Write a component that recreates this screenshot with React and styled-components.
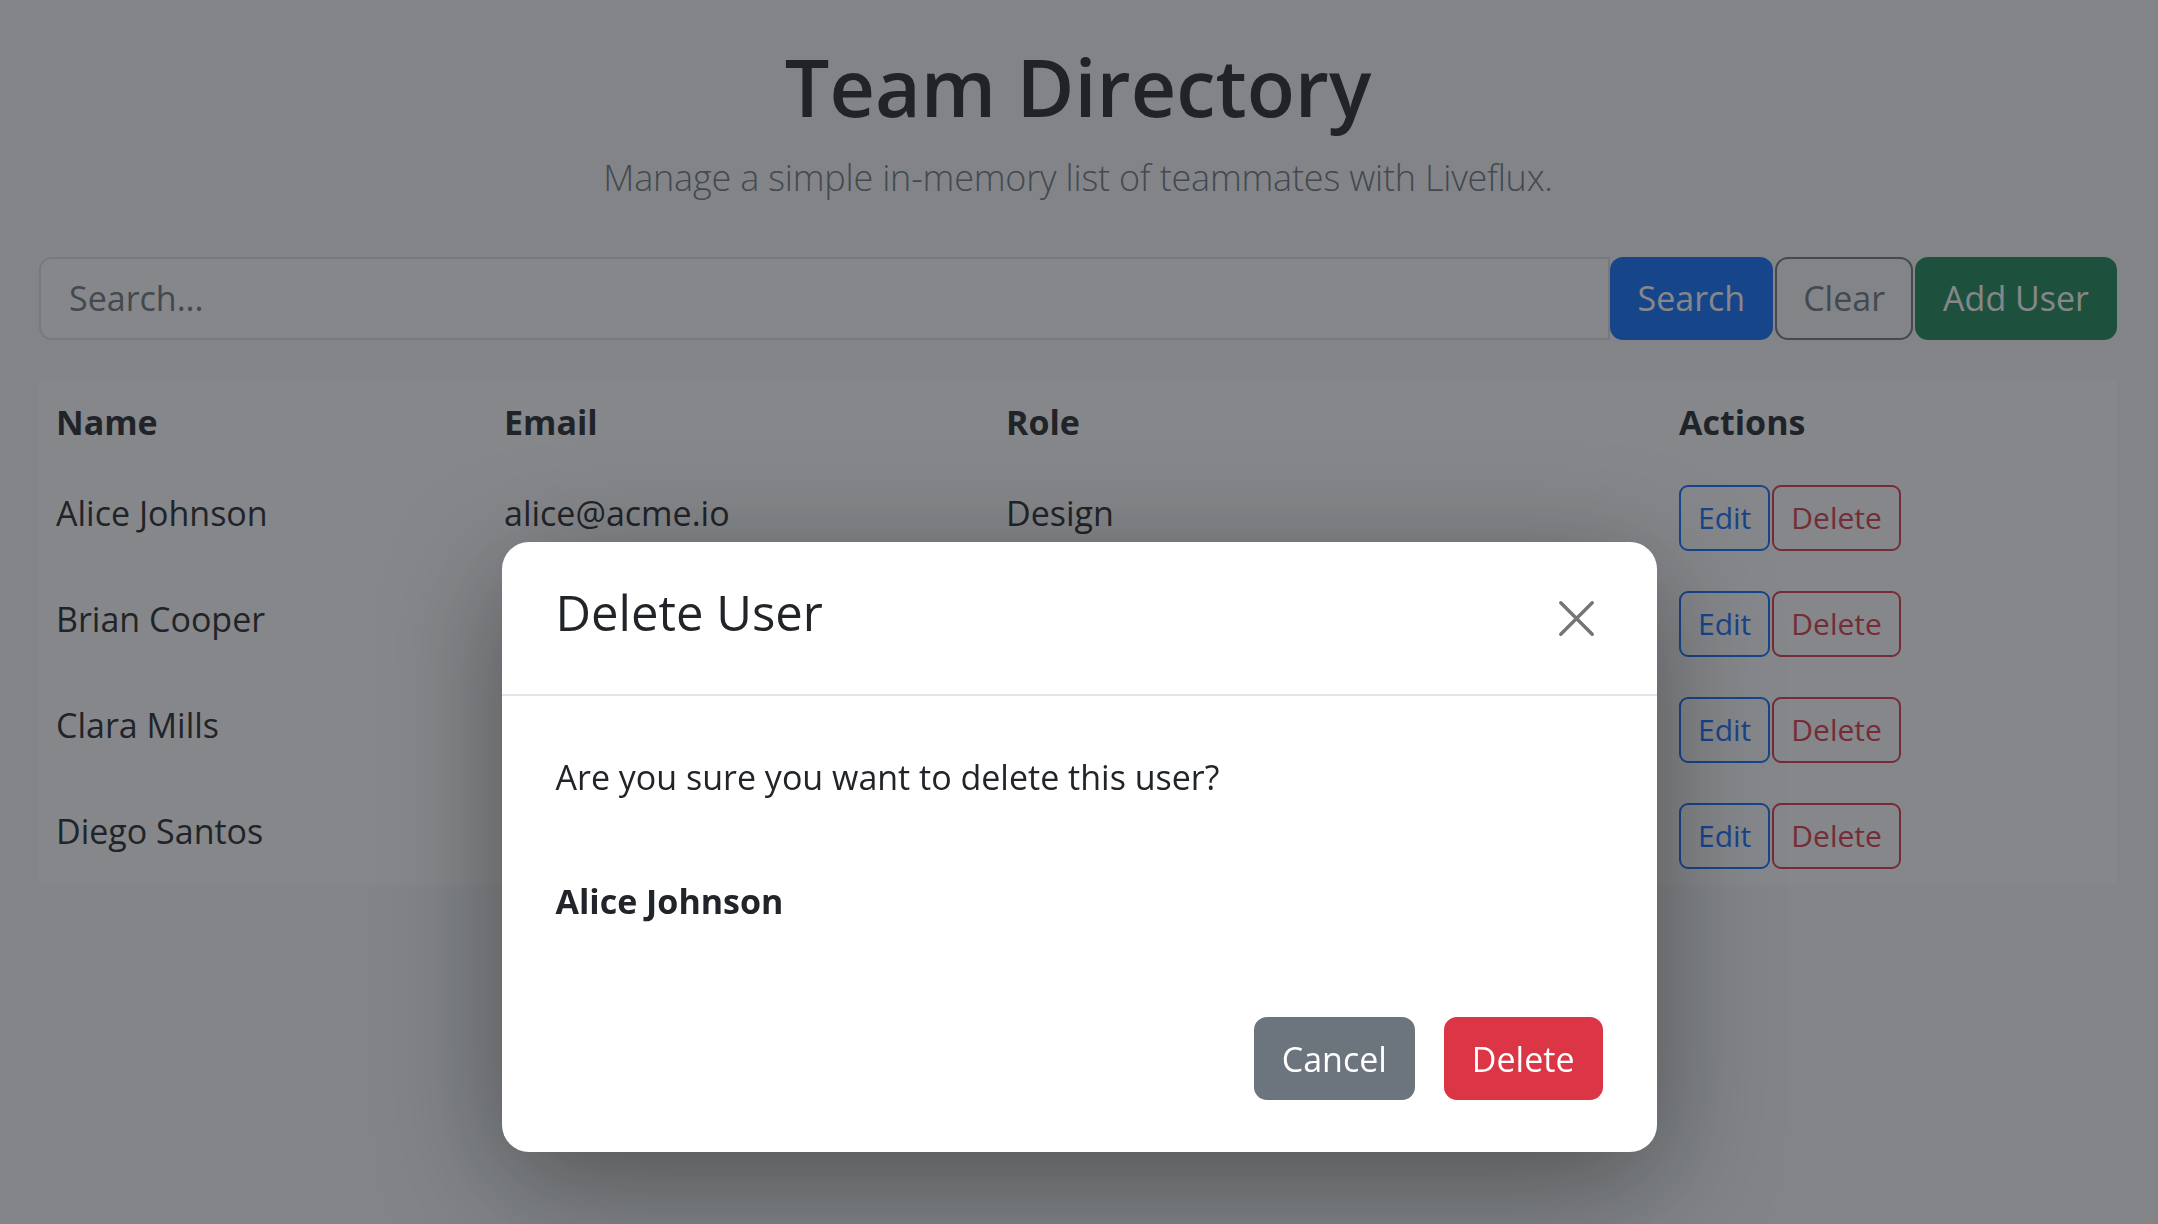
import styled, { createGlobalStyle } from "styled-components";

const GlobalStyle = createGlobalStyle`
  * { box-sizing: border-box; }
  html, body {
    margin: 0;
    background: #f8f9fa;
  }
  body {
    font-family: "Open Sans", "Noto Sans", "Liberation Sans", sans-serif;
    font-size: 34px;
    line-height: 1.5;
    color: #212529;
  }
`;

const Page = styled.main`
  padding: 40px 41px 0 39px;
  min-height: 100vh;
`;

const Header = styled.header`
  text-align: center;
`;

const Title = styled.h1`
  margin: 0 0 16px;
  font-size: 79px;
  font-weight: 600;
  line-height: 1.2;
`;

const Lead = styled.p`
  margin: 0;
  font-size: 36px;
  font-weight: 300;
  letter-spacing: -0.2px;
  color: #6c757d;
`;

const SearchBar = styled.form`
  display: flex;
  height: 83px;
  margin-top: 52px;
`;

const SearchInput = styled.input`
  flex: 1;
  min-width: 0;
  height: 100%;
  padding: 0 28px;
  border: 2px solid #dee2e6;
  border-radius: 13px 0 0 13px;
  background: #fff;
  font: inherit;
  color: #212529;
  outline: none;

  &::placeholder {
    color: #6c757d;
  }
`;

const variants = {
  primary: { bg: "#0d6efd", border: "#0d6efd", color: "#fff" },
  success: { bg: "#198754", border: "#198754", color: "#fff" },
  secondary: { bg: "#6c757d", border: "#6c757d", color: "#fff" },
  danger: { bg: "#dc3545", border: "#dc3545", color: "#fff" },
  "outline-secondary": { bg: "transparent", border: "#6c757d", color: "#6c757d" },
  "outline-primary": { bg: "transparent", border: "#0d6efd", color: "#0d6efd" },
  "outline-danger": { bg: "transparent", border: "#dc3545", color: "#dc3545" },
};

const Button = styled.button`
  height: 83px;
  padding: 0 26px;
  border: 2px solid ${(p) => variants[p.$variant].border};
  border-radius: 13px;
  background: ${(p) => variants[p.$variant].bg};
  color: ${(p) => variants[p.$variant].color};
  font: inherit;
  line-height: 1;
  white-space: nowrap;
  cursor: pointer;

  & + & {
    margin-left: 2px;
  }
`;

const SmallButton = styled(Button)`
  height: 66px;
  padding: 0 17px;
  font-size: 30px;
  border-radius: 9px;
`;

const Table = styled.table`
  width: 100%;
  margin-top: 39px;
  border-collapse: collapse;
  background: #fff;
`;

const Th = styled.th`
  height: 82px;
  padding: 18px 17px 0;
  text-align: left;
  font-weight: 700;
  vertical-align: top;
`;

const Td = styled.td`
  height: 106px;
  padding: 0 17px;
  vertical-align: middle;
`;

const Actions = styled.div`
  display: flex;
  align-items: center;
  padding-top: 8px;
`;

const Backdrop = styled.div`
  position: fixed;
  inset: 0;
  background: rgba(33, 37, 41, 0.55);
  display: flex;
  justify-content: center;
  align-items: flex-start;
  padding-top: 542px;
`;

const Modal = styled.div`
  width: 1155px;
  background: #fff;
  border-radius: 27px;
  box-shadow: 0 30px 120px rgba(0, 0, 0, 0.38);
  overflow: hidden;
`;

const ModalHeader = styled.div`
  display: flex;
  align-items: center;
  justify-content: space-between;
  height: 154px;
  padding: 0 54px;
  border-bottom: 2px solid #e3e5e8;
`;

const ModalTitle = styled.h2`
  margin: 0 0 11px;
  font-size: 49px;
  font-weight: 400;
  line-height: 1.2;
`;

const CloseButton = styled.button`
  display: flex;
  padding: 0;
  margin-right: 8px;
  border: 0;
  background: none;
  cursor: pointer;
`;

const ModalBody = styled.div`
  padding: 56px 54px 0;
`;

const Message = styled.p`
  margin: 0 0 73px;
`;

const Target = styled.p`
  margin: 0;
  font-weight: 700;
`;

const ModalFooter = styled.div`
  display: flex;
  justify-content: flex-end;
  gap: 27px;
  padding: 90px 54px 52px;
`;

const users = [
  { name: "Alice Johnson", email: "alice@acme.io", role: "Design" },
  { name: "Brian Cooper", email: "brian@acme.io", role: "Engineering" },
  { name: "Clara Mills", email: "clara@acme.io", role: "Product" },
  { name: "Diego Santos", email: "diego@acme.io", role: "Support" },
];

function CloseIcon() {
  return (
    <svg width="37" height="37" viewBox="0 0 16 16" fill="none">
      <path
        d="M1.2 1.2 L14.8 14.8 M14.8 1.2 L1.2 14.8"
        stroke="#757575"
        strokeWidth="1.5"
        strokeLinecap="round"
      />
    </svg>
  );
}

export default function App() {
  return (
    <>
      <GlobalStyle />
      <Page>
        <Header>
          <Title>Team Directory</Title>
          <Lead>Manage a simple in-memory list of teammates with Liveflux.</Lead>
        </Header>

        <SearchBar onSubmit={(e) => e.preventDefault()}>
          <SearchInput placeholder="Search..." />
          <Button $variant="primary">Search</Button>
          <Button $variant="outline-secondary" type="button">
            Clear
          </Button>
          <Button $variant="success" type="button">
            Add User
          </Button>
        </SearchBar>

        <Table>
          <colgroup>
            <col style={{ width: 448 }} />
            <col style={{ width: 502 }} />
            <col style={{ width: 673 }} />
            <col />
          </colgroup>
          <thead>
            <tr>
              <Th>Name</Th>
              <Th>Email</Th>
              <Th>Role</Th>
              <Th>Actions</Th>
            </tr>
          </thead>
          <tbody>
            {users.map((u) => (
              <tr key={u.email}>
                <Td>{u.name}</Td>
                <Td>{u.email}</Td>
                <Td>{u.role}</Td>
                <Td>
                  <Actions>
                    <SmallButton $variant="outline-primary">Edit</SmallButton>
                    <SmallButton $variant="outline-danger">Delete</SmallButton>
                  </Actions>
                </Td>
              </tr>
            ))}
          </tbody>
        </Table>
      </Page>

      <Backdrop>
        <Modal role="dialog">
          <ModalHeader>
            <ModalTitle>Delete User</ModalTitle>
            <CloseButton aria-label="Close">
              <CloseIcon />
            </CloseButton>
          </ModalHeader>
          <ModalBody>
            <Message>Are you sure you want to delete this user?</Message>
            <Target>Alice Johnson</Target>
          </ModalBody>
          <ModalFooter>
            <Button $variant="secondary">Cancel</Button>
            <Button $variant="danger">Delete</Button>
          </ModalFooter>
        </Modal>
      </Backdrop>
    </>
  );
}
